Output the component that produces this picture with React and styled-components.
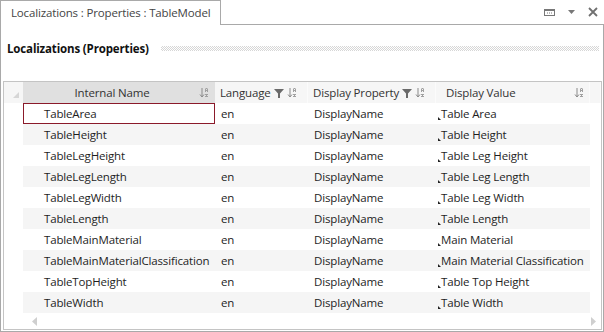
import React from 'react';
import styled, { createGlobalStyle } from 'styled-components';

const GlobalStyle = createGlobalStyle`
    body {
        margin: 0;
        background: #ffffff;
        font-family: "Open Sans", "Noto Sans", sans-serif;
        font-size: 11.5px;
        letter-spacing: -0.15px;
        color: #1e1e1e;
    }
`;

const Window = styled.div`
    width: 604px;
    height: 332px;
    display: flex;
    flex-direction: column;
    box-sizing: border-box;
`;

const TabStrip = styled.div`
    display: flex;
    height: 25px;
`;

const Tab = styled.div`
    box-sizing: border-box;
    width: 221px;
    border: 1px solid #a9a9a9;
    border-bottom: none;
    padding: 4px 0 0 10px;
    white-space: nowrap;
    color: #444;
`;

const TabFiller = styled.div`
    flex: 1;
    border-bottom: 1px solid #a9a9a9;
    display: flex;
    justify-content: flex-end;
    align-items: center;
    gap: 13px;
    padding: 0 6px 0 0;
`;

const Panel = styled.div`
    flex: 1;
    border: 1px solid #a9a9a9;
    border-top: none;
    padding: 0 1px 1px 2px;
    display: flex;
    flex-direction: column;
`;

const TitleRow = styled.div`
    display: flex;
    align-items: center;
    gap: 12px;
    height: 22px;
    margin: 12px 3px 0 4px;
`;

const Title = styled.div`
    font-weight: 700;
    white-space: nowrap;
    color: #111;
`;

const Dots = styled.div`
    flex: 1;
    height: 5px;
    margin-top: 1px;
    background-image: repeating-conic-gradient(#d6d6d6 0 25%, transparent 0 50%);
    background-size: 2px 2px;
`;

const Grid = styled.div`
    margin-top: 22px;
    flex: 1;
    border: 1px solid #c4c4c4;
    display: flex;
    flex-direction: column;
`;

const columns = '19px 192px 93px 128px 154px 1fr';

const HeaderRow = styled.div`
    display: grid;
    grid-template-columns: ${columns};
    height: 21px;
    flex: none;
    background: #f6f6f6;
`;

const HeaderCell = styled.div`
    display: flex;
    align-items: center;
    gap: 3px;
    padding: 0 5px 0 ${(p) => p.$pad || 5}px;
    background: ${(p) => (p.$active ? '#e0e0e0' : 'transparent')};
    color: #333;
    white-space: nowrap;
    border-right: 1px solid ${(p) => (p.$active ? '#e0e0e0' : '#fbfbfb')};
`;

const HeaderLabel = styled.span`
    flex: ${(p) => (p.$center ? 1 : 'none')};
    text-align: ${(p) => (p.$center ? 'center' : 'left')};
    margin-right: ${(p) => (p.$grow ? 'auto' : 0)};
`;

const Corner = styled.div`
    display: flex;
    align-items: flex-end;
    justify-content: flex-end;
    padding: 0 4px 5px 0;
`;

const Body = styled.div`
    display: flex;
    flex-direction: column;
    flex: none;
`;

const Row = styled.div`
    display: grid;
    grid-template-columns: ${columns};
    height: 21px;
`;

const Cell = styled.div`
    display: flex;
    align-items: center;
    padding-left: ${(p) => p.$pad ?? 5}px;
    background: ${(p) => (p.$alt ? '#f5f5f5' : '#ffffff')};
    white-space: nowrap;
    overflow: hidden;
    position: relative;
    box-sizing: border-box;
    border: ${(p) => (p.$current ? '1px solid #8b1a2a' : '1px solid transparent')};
`;

const Marker = styled.span`
    position: absolute;
    left: 1px;
    bottom: 3px;
    width: 0;
    height: 0;
    border-left: 3px solid #222;
    border-top: 3px solid transparent;
`;

const Scrollbar = styled.div`
    flex: 1;
    display: flex;
    align-items: center;
    justify-content: space-between;
    padding: 0 5px 0 28px;
`;

const SortIcon = () => (
    <svg width="10" height="12" viewBox="0 0 10 12">
        <path d="M3 1v9M1 7.5L3 10l2-2.5" stroke="#8a8a8a" strokeWidth="1" fill="none" />
        <rect x="6.5" y="1" width="2" height="1" fill="#a0a0a0" />
        <rect x="6" y="2" width="1" height="3" fill="#a0a0a0" />
        <rect x="8" y="2" width="1" height="3" fill="#a0a0a0" />
        <rect x="7" y="3" width="1" height="1" fill="#a0a0a0" />
        <rect x="6" y="7" width="3" height="1" fill="#a0a0a0" />
        <rect x="7" y="8" width="1" height="1" fill="#a0a0a0" />
        <rect x="6" y="9" width="3" height="1" fill="#a0a0a0" />
    </svg>
);

const FilterIcon = () => (
    <svg width="10" height="10" viewBox="0 0 10 10">
        <path d="M0 1h10L6 5.5V10H4V5.5z" fill="#6a6a6a" />
    </svg>
);

const rows = [
    ['TableArea', 'Table Area'],
    ['TableHeight', 'Table Height'],
    ['TableLegHeight', 'Table Leg Height'],
    ['TableLegLength', 'Table Leg Length'],
    ['TableLegWidth', 'Table Leg Width'],
    ['TableLength', 'Table Length'],
    ['TableMainMaterial', 'Main Material'],
    ['TableMainMaterialClassification', 'Main Material Classification'],
    ['TableTopHeight', 'Table Top Height'],
    ['TableWidth', 'Table Width'],
];

const App = () => (
    <>
        <GlobalStyle />
        <Window>
            <TabStrip>
                <Tab>Localizations : Properties : TableModel</Tab>
                <TabFiller>
                    <svg width="11" height="7" viewBox="0 0 11 7">
                        <rect x="0.5" y="0.5" width="10" height="6" fill="none" stroke="#777" />
                        <rect x="0" y="0" width="11" height="2" fill="#777" />
                        <rect x="3" y="3.5" width="1" height="1" fill="#777" />
                        <rect x="5" y="3.5" width="1" height="1" fill="#777" />
                        <rect x="7" y="3.5" width="1" height="1" fill="#777" />
                    </svg>
                    <svg width="7" height="4" viewBox="0 0 7 4">
                        <path d="M0 0h7L3.5 4z" fill="#777" />
                    </svg>
                    <svg width="10" height="10" viewBox="0 0 10 10">
                        <path d="M1 1l8 8M9 1l-8 8" stroke="#707070" strokeWidth="1.8" />
                    </svg>
                </TabFiller>
            </TabStrip>
            <Panel>
                <TitleRow>
                    <Title>Localizations (Properties)</Title>
                    <Dots />
                </TitleRow>
                <Grid>
                    <HeaderRow>
                        <Corner>
                            <svg width="6" height="6" viewBox="0 0 6 6">
                                <path d="M6 0v6H0z" fill="#d6d6d6" />
                            </svg>
                        </Corner>
                        <HeaderCell $active>
                            <HeaderLabel $center>Internal Name</HeaderLabel>
                            <SortIcon />
                        </HeaderCell>
                        <HeaderCell>
                            <HeaderLabel>Language</HeaderLabel>
                            <FilterIcon />
                            <SortIcon />
                        </HeaderCell>
                        <HeaderCell>
                            <HeaderLabel>Display Property</HeaderLabel>
                            <FilterIcon />
                            <SortIcon />
                        </HeaderCell>
                        <HeaderCell $pad={10}>
                            <HeaderLabel $grow>Display Value</HeaderLabel>
                            <SortIcon />
                        </HeaderCell>
                        <HeaderCell />
                    </HeaderRow>
                    <Body>
                        {rows.map(([name, value], i) => {
                            const alt = i % 2 === 1;
                            return (
                                <Row key={name}>
                                    <Cell />
                                    <Cell $alt={alt} $pad={20} $current={i === 0}>{name}</Cell>
                                    <Cell $alt={alt}>en</Cell>
                                    <Cell $alt={alt}>DisplayName</Cell>
                                    <Cell $alt={alt} $pad={4}>
                                        <Marker />
                                        {value}
                                    </Cell>
                                    <Cell />
                                </Row>
                            );
                        })}
                    </Body>
                    <Scrollbar>
                        <svg width="5" height="9" viewBox="0 0 5 9">
                            <path d="M5 0v9L0 4.5z" fill="#cfcfcf" />
                        </svg>
                        <svg width="5" height="9" viewBox="0 0 5 9">
                            <path d="M0 0v9l5-4.5z" fill="#cfcfcf" />
                        </svg>
                    </Scrollbar>
                </Grid>
            </Panel>
        </Window>
    </>
);

export default App;
